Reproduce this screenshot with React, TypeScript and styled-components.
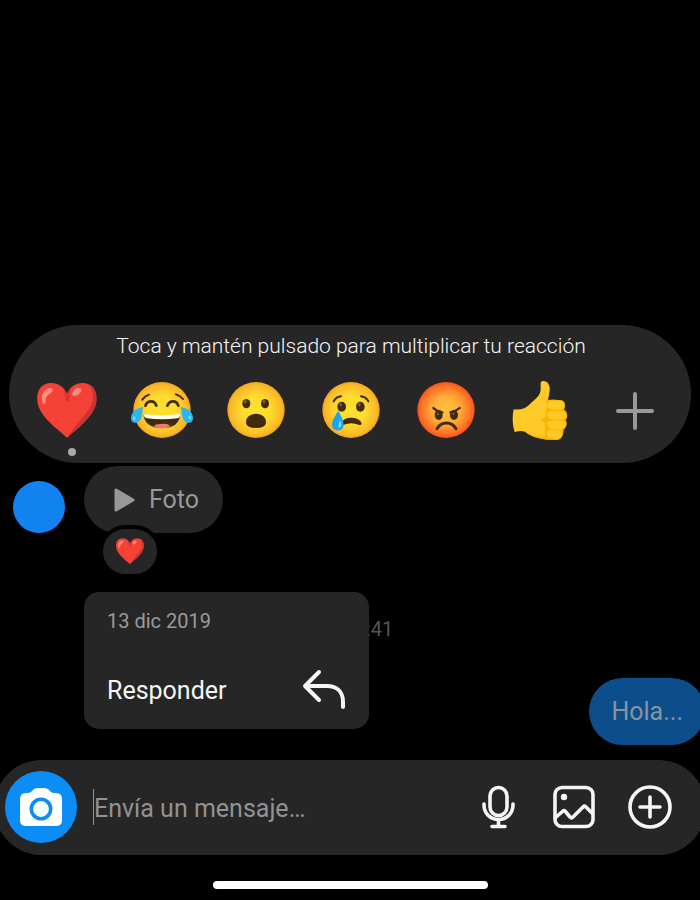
import React from "react";
import styled, { createGlobalStyle } from "styled-components";

const GlobalStyle = createGlobalStyle`
  *, *::before, *::after { box-sizing: border-box; }
  body { margin: 0; background: #000; font-family: Roboto, "Noto Sans", sans-serif; }
  button { border: 0; padding: 0; background: none; color: inherit; font: inherit; cursor: pointer; }
  svg { display: block; }
`;

const Screen = styled.main`
  min-height: 100vh;
  display: flex;
  flex-direction: column;
  justify-content: flex-end;
  overflow: hidden;
  background: #000;
  color: #f5f5f5;
`;

const ReactionTray = styled.section`
  margin: 0 9px;
  padding: 9px 24px 7px 26px;
  border-radius: 70px;
  background: #262626;
`;

const TrayHint = styled.p`
  margin: 0;
  text-align: center;
  font-size: 21px;
  font-weight: 300;
  line-height: 24px;
`;

const ReactionList = styled.div`
  display: flex;
  justify-content: space-between;
  margin-top: 20px;
`;

const ReactionButton = styled.button`
  flex: none;
  width: 64px;
  height: 64px;
`;

const SelectedDot = styled.div`
  width: 8px;
  height: 8px;
  margin: 6px 0 0 33px;
  border-radius: 50%;
  background: #a8a8a8;
`;

const Conversation = styled.section`
  position: relative;
  display: flex;
  flex-direction: column;
  margin-top: 3px;
  padding-bottom: 15px;
`;

const IncomingRow = styled.div`
  display: flex;
  align-items: flex-end;
  gap: 19px;
  padding-left: 13px;
`;

const Avatar = styled.div`
  width: 52px;
  height: 52px;
  border-radius: 50%;
  background: #1282f0;
`;

const Bubble = styled.div<{ $outgoing?: boolean }>`
  position: relative;
  display: flex;
  align-items: center;
  gap: 14px;
  height: 67px;
  padding: ${(p) => (p.$outgoing ? "0 22px" : "0 24px 0 29px")};
  border-radius: 34px;
  background: ${(p) => (p.$outgoing ? "#0b4e8b" : "#262626")};
  color: ${(p) => (p.$outgoing ? "#8a94a0" : "#989898")};
  font-size: 25px;
  line-height: 32px;
`;

const BubbleReaction = styled.div`
  position: absolute;
  left: 15px;
  top: 59px;
  display: grid;
  place-items: center;
  width: 62px;
  height: 53px;
  padding-bottom: 2px;
  border: 4px solid #000;
  border-radius: 27px;
  background: #262626;
`;

const Timestamp = styled.time`
  margin: 84px 0 0 366px;
  color: #555;
  font-size: 20px;
  line-height: 24px;
`;

const OutgoingRow = styled.div`
  display: flex;
  justify-content: flex-end;
  margin: 37px -5px 0 0;
`;

const ContextMenu = styled.div`
  position: absolute;
  left: 84px;
  bottom: 31px;
  width: 285px;
  padding: 17px 23px 16px;
  border-radius: 15px;
  background: #262626;
`;

const MenuDate = styled.p`
  margin: 0;
  color: #9a9a9a;
  font-size: 20px;
  line-height: 24px;
`;

const MenuItem = styled.button`
  display: flex;
  align-items: center;
  justify-content: space-between;
  width: 100%;
  margin-top: 36px;
  && { font-size: 25px; }
  line-height: 32px;
`;

const Composer = styled.form`
  display: flex;
  align-items: center;
  height: 95px;
  margin: 0 -6px;
  padding: 0 34px 1px 11px;
  border-radius: 48px;
  background: #262626;
`;

const CameraButton = styled.button`
  display: grid;
  flex: none;
  place-items: center;
  width: 72px;
  height: 72px;
  border-radius: 50%;
  && { background: #0b8df5; }
`;

const MessageInput = styled.input`
  flex: 1;
  min-width: 0;
  height: 36px;
  margin: 0 12px 0 16px;
  padding: 2px 0 0;
  border: 0;
  border-left: 1px solid #929292;
  outline: 0;
  background: none;
  color: #f5f5f5;
  font-family: inherit;
  font-size: 25px;
  &::placeholder { color: #929292; opacity: 1; }
`;

const ComposerActions = styled.div`
  display: flex;
  gap: 32px;
`;

const IconButton = styled.button`
  width: 44px;
  height: 44px;
`;

const HomeIndicator = styled.div`
  align-self: center;
  width: 275px;
  height: 8px;
  margin: 26px 0 11px;
  border-radius: 4px;
  background: #fff;
`;

const HeartArt = ({ size, id }: { size: number; id: string }) => (
  <svg width={size} height={size} viewBox="28 24 192 192" aria-hidden="true">
    <defs>
      <clipPath id={id}>
        <path d="M124 203C91 174 51 145 38 108C27 70 43 39 76 39C99 39 116 52 124 72C132 52 149 39 170 39C204 39 220 69 210 106C198 143 156 176 124 203Z" />
      </clipPath>
    </defs>
    <g clipPath={`url(#${id})`}>
      <rect x="28" y="24" width="192" height="192" fill="#f44336" />
      <path d="M182 36C210 62 207 101 181 130C163 153 140 178 122 206L222 206V30Z" fill="#c33" />
      <path d="M113 52Q120 61 124 74Q128 61 136 52L131 93Q125 101 119 89Z" fill="#dc3430" />
    </g>
    <path d="M52 99C42 78 54 56 73 54C83 54 84 65 75 70C60 78 60 88 59 98C58 104 54 103 52 99Z" fill="#ff8a80" />
    <path d="M141 75C136 68 145 56 156 54C169 52 171 63 161 71C153 78 145 80 141 75Z" fill="#ff8a80" />
  </svg>
);

const FaceGradient = ({ id, angry }: { id: string; angry?: boolean }) => (
  <defs>
    <radialGradient id={id}>
      <stop offset="0" stopColor={angry ? "#ffc13b" : "#fde030"} />
      <stop offset="0.5" stopColor={angry ? "#ffac37" : "#fddc2d"} />
      <stop offset="0.9" stopColor={angry ? "#ff6922" : "#f9b928"} />
      <stop offset="1" stopColor={angry ? "#f4511e" : "#f2a21d"} />
    </radialGradient>
  </defs>
);

const LaughArt = () => (
  <svg width="64" height="64" viewBox="26 24 192 192" aria-hidden="true">
    <FaceGradient id="laugh" />
    <ellipse cx="122" cy="120" rx="86" ry="84" fill="url(#laugh)" />
    <g fill="none" stroke="#422b0d" strokeLinecap="round">
      <path d="M63 89Q71 78 83 74M164 73Q177 77 185 87" strokeWidth="6" />
      <path d="M72 107Q77 94 89 94Q101 94 105 107M138 107Q143 94 155 94Q167 94 171 107" strokeWidth="8" />
    </g>
    <path d="M66 132Q121 148 177 131Q175 174 122 174Q70 174 66 132Z" fill="#422b0d" />
    <path d="M66 132Q121 141 177 131Q178 141 168 145Q121 151 77 145Q68 143 66 132Z" fill="#fff" />
    <path d="M96 169Q105 160 122 162Q139 160 147 168Q122 183 96 169Z" fill="#ef7474" />
    <path d="M66 111C47 114 30 124 29 143C28 164 54 163 60 143C63 132 62 122 66 111Z" fill="#29b6f6" />
    <path d="M178 111C197 114 214 124 215 143C216 164 190 163 184 143C181 132 182 122 178 111Z" fill="#29b6f6" />
    <path d="M34 145Q38 134 42 142T39 151Q34 151 34 145ZM201 142Q206 129 210 145Q207 155 201 142Z" fill="#81d4fa" />
  </svg>
);

const SurpriseArt = () => (
  <svg width="64" height="64" viewBox="309 24 192 192" aria-hidden="true">
    <FaceGradient id="surprise" />
    <ellipse cx="405" cy="120" rx="86" ry="84" fill="url(#surprise)" />
    <g fill="#422b0d">
      <ellipse cx="376" cy="101" rx="12" ry="14" />
      <ellipse cx="432" cy="101" rx="12" ry="14" />
      <path d="M375 156C375 142 387 131 405 131C423 131 435 142 435 156C435 170 421 174 405 174C389 174 375 170 375 156Z" />
    </g>
    <g fill="#896024"><ellipse cx="373" cy="95" rx="4" ry="5" /><ellipse cx="429" cy="95" rx="4" ry="5" /></g>
  </svg>
);

const SadArt = () => (
  <svg width="64" height="64" viewBox="22 24 192 192" aria-hidden="true">
    <FaceGradient id="sad" />
    <ellipse cx="118" cy="120" rx="86" ry="84" fill="url(#sad)" />
    <g fill="none" stroke="#422b0d" strokeLinecap="round" strokeWidth="6">
      <path d="M66 94Q74 80 88 79M148 79Q162 80 170 94" />
    </g>
    <g fill="#422b0d">
      <ellipse cx="90" cy="110" rx="13" ry="15" />
      <ellipse cx="146" cy="110" rx="13" ry="15" />
      <path d="M88 160Q94 143 119 143Q144 143 150 160Q150 168 141 164Q119 155 96 164Q88 167 88 160Z" />
    </g>
    <g fill="#896024"><ellipse cx="87" cy="104" rx="4" ry="5" /><ellipse cx="143" cy="104" rx="4" ry="5" /></g>
    <path d="M79 122C88 136 96 151 96 164C96 174 89 181 79 181C68 181 61 174 61 164C61 151 71 137 79 122Z" fill="#1ea4ee" />
    <path d="M84 151Q91 154 88 169Q84 177 80 170Q82 161 84 151Z" fill="#81d4fa" />
  </svg>
);

const AngryArt = () => (
  <svg width="64" height="64" viewBox="307 24 192 192" aria-hidden="true">
    <FaceGradient id="angry" angry />
    <ellipse cx="403" cy="120" rx="86" ry="84" fill="url(#angry)" />
    <g fill="#422b0d">
      <ellipse cx="381" cy="135" rx="12" ry="15" />
      <ellipse cx="427" cy="135" rx="12" ry="15" />
    </g>
    <g fill="none" stroke="#422b0d" strokeLinecap="round">
      <path d="M365 114Q375 124 392 127M444 114Q433 124 416 127" strokeWidth="7" />
      <path d="M376 176Q386 159 404 159Q423 159 433 176" strokeWidth="9" />
    </g>
    <g fill="#896024"><ellipse cx="379" cy="132" rx="3" ry="4" /><ellipse cx="425" cy="132" rx="3" ry="4" /></g>
  </svg>
);

const ThumbArt = () => (
  <svg width="64" height="64" viewBox="23 24 192 192" aria-hidden="true">
    <path d="M40 118C58 121 74 116 86 105C108 83 119 78 121 59L121 38C123 30 139 32 144 41C152 55 147 69 143 90Q162 88 182 91C195 94 197 108 190 119C202 124 204 143 195 150C202 160 198 174 189 178C190 193 183 210 172 209Q142 211 117 205Q91 199 74 185Q61 181 43 186C36 165 35 139 40 118Z" fill="#ffca28" />
    <path d="M137 91L143 90Q164 88 182 91C195 94 197 108 190 119C202 124 204 143 195 150C202 160 198 174 189 178C190 193 183 210 172 209Q142 211 117 205Q91 199 74 185Q112 202 132 201Q138 176 133 158Q126 151 115 153Q139 146 137 126Q144 108 137 91Z" fill="#ffb300" />
    <path d="M147 93Q166 90 182 93C195 98 191 118 179 119Q163 122 148 117Q134 107 147 93ZM146 124Q165 120 186 124C201 129 198 147 186 149Q163 151 148 146Q135 134 146 124ZM144 154Q165 149 187 154C199 159 196 175 185 178Q166 179 147 176Q136 165 144 154ZM144 181Q161 178 180 182C188 188 182 206 170 206Q153 206 144 204Q134 191 144 181Z" fill="#ffca28" />
  </svg>
);

const PlusArt = () => (
  <svg width="64" height="64" viewBox="0 0 64 64" aria-hidden="true">
    <path d="M32 16V50M15 33H49" fill="none" stroke="#999" strokeWidth="4" strokeLinecap="round" />
  </svg>
);

const reactions: { label: string; art: React.ReactNode }[] = [
  { label: "Me encanta", art: <HeartArt size={64} id="heart-large" /> },
  { label: "Me divierte", art: <LaughArt /> },
  { label: "Me asombra", art: <SurpriseArt /> },
  { label: "Me entristece", art: <SadArt /> },
  { label: "Me enfada", art: <AngryArt /> },
  { label: "Me gusta", art: <ThumbArt /> },
  { label: "Más reacciones", art: <PlusArt /> },
];

export default function App() {
  return (
    <Screen>
      <GlobalStyle />
      <ReactionTray>
        <TrayHint>Toca y mantén pulsado para multiplicar tu reacción</TrayHint>
        <ReactionList>
          {reactions.map(({ label, art }) => (
            <ReactionButton key={label} type="button" aria-label={label}>{art}</ReactionButton>
          ))}
        </ReactionList>
        <SelectedDot />
      </ReactionTray>

      <Conversation>
        <IncomingRow>
          <Avatar />
          <Bubble>
            <svg width="22" height="26" viewBox="0 0 22 26" aria-hidden="true">
              <path d="M3 3V23L20 13Z" fill="#989898" stroke="#989898" strokeWidth="3" strokeLinejoin="round" />
            </svg>
            Foto
            <BubbleReaction><HeartArt size={30} id="heart-small" /></BubbleReaction>
          </Bubble>
        </IncomingRow>
        <Timestamp>:41</Timestamp>
        <OutgoingRow><Bubble $outgoing>Hola...</Bubble></OutgoingRow>
        <ContextMenu>
          <MenuDate>13 dic 2019</MenuDate>
          <MenuItem type="button">
            Responder
            <svg width="44" height="44" viewBox="0 0 44 44" fill="none" stroke="#f5f5f5" strokeWidth="4" strokeLinecap="round" strokeLinejoin="round" aria-hidden="true">
              <path d="M17 3L3 17L17 31M3 17H25C35 17 41 23 41 33V38" />
            </svg>
          </MenuItem>
        </ContextMenu>
      </Conversation>

      <Composer onSubmit={(e) => e.preventDefault()}>
        <CameraButton type="button" aria-label="Cámara">
          <svg width="44" height="40" viewBox="0 0 44 40" aria-hidden="true">
            <path d="M12 5L15 2Q17 1 19 1H25Q27 1 29 2L32 5Q33 6 36 6H37Q43 6 43 12V33Q43 39 37 39H7Q1 39 1 33V12Q1 6 7 6H8Q11 6 12 5Z" fill="#fff" />
            <circle cx="22" cy="22" r="9.7" fill="#fff" stroke="#0b8df5" strokeWidth="3.6" />
          </svg>
        </CameraButton>
        <MessageInput type="text" aria-label="Mensaje" placeholder="Envía un mensaje…" />
        <ComposerActions>
          <IconButton type="button" aria-label="Grabar audio">
            <svg width="44" height="44" viewBox="0 0 44 44" fill="none" stroke="#f5f5f5" strokeWidth="3.6" strokeLinecap="round" aria-hidden="true">
              <rect x="14" y="2.5" width="17" height="28" rx="8.5" />
              <path d="M8 19V20C8 28 14 34.5 22.5 34.5S37 28 37 20V19M22.5 35V41M16 41.5H29" />
            </svg>
          </IconButton>
          <IconButton type="button" aria-label="Enviar imagen">
            <svg width="44" height="44" viewBox="0 0 44 44" fill="none" stroke="#f5f5f5" strokeWidth="3.6" strokeLinejoin="round" aria-hidden="true">
              <rect x="3" y="2.5" width="38" height="39" rx="7" />
              <path d="M3 33L11 26Q12 25 13 26L18 32Q19.5 34 21 32L31 22Q32.5 20.5 34 22L41 29" />
              <circle cx="12" cy="12" r="3.2" fill="#f5f5f5" stroke="none" />
            </svg>
          </IconButton>
          <IconButton type="button" aria-label="Más opciones">
            <svg width="44" height="44" viewBox="0 0 44 44" fill="none" stroke="#f5f5f5" strokeWidth="3.6" strokeLinecap="round" aria-hidden="true">
              <circle cx="22" cy="22" r="20" />
              <path d="M22 12V32M12 22H32" />
            </svg>
          </IconButton>
        </ComposerActions>
      </Composer>
      <HomeIndicator />
    </Screen>
  );
}
